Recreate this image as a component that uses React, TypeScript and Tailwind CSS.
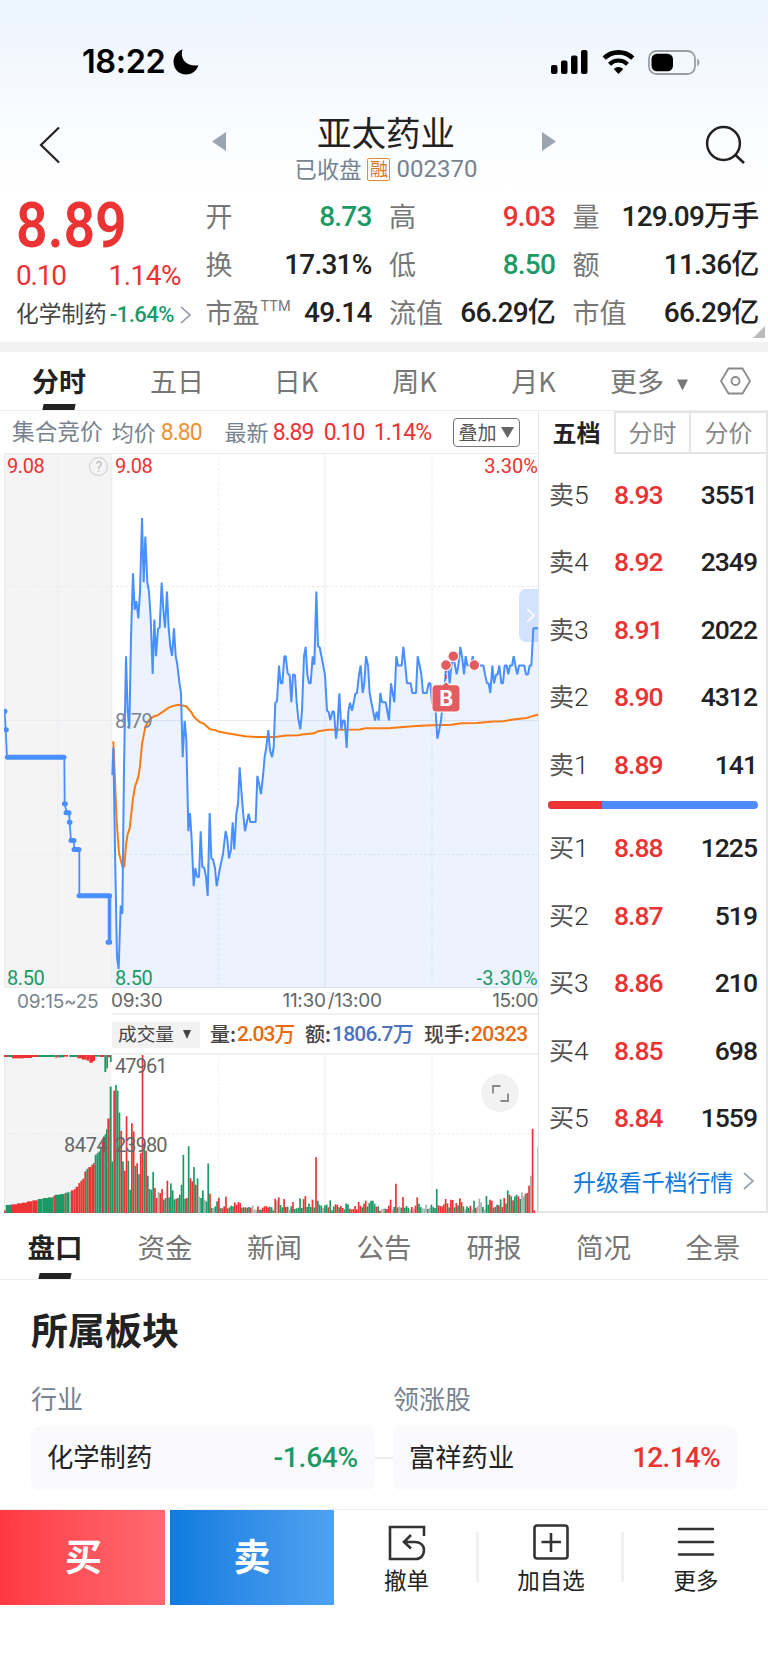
import React from "react"

const pricePath =
  "337,910 340,833 346,1170 351,1420 356,1453 362,1275 367,1298 372,890 378,577 383,730 388,780 393,525 399,345 404,447 409,423 415,471 420,396 426,190 431,370 436,242 442,370 447,396 452,470 458,627 463,474 468,577 474,500 479,497 485,371 490,447 495,497 501,396 506,500 511,550 516,576 522,499 527,576 532,601 538,650 543,680 548,860 554,758 559,810 565,1067 570,1016 575,1090 581,1221 586,1170 591,1194 597,1196 602,1067 607,1167 613,1170 618,1194 623,1248 629,1016 634,1143 639,1146 645,1170 650,1221 658,1180 669,1130 677,1067 682,1090 687,1143 693,1118 698,1042 703,1118 709,1018 714,990 719,888 725,965 730,1022 735,1067 741,1040 746,1018 751,1041 767,1041 772,912 778,938 783,963 789,912 794,858 799,832 805,784 810,840 816,860 821,832 826,707 831,703 837,603 842,653 847,653 853,577 857,577 863,625 869,630 874,706 879,628 885,630 890,706 895,752 901,782 906,730 912,577 917,551 922,628 927,653 932,653 938,577 943,601 949,396 954,549 959,552 965,580 975,630 981,729 986,733 991,756 997,732 1002,732 1008,808 1012,780 1018,681 1024,782 1029,757 1034,757 1040,834 1045,732 1050,707 1056,730 1061,707 1066,682 1071,680 1077,628 1082,603 1088,680 1093,653 1098,577 1104,603 1109,680 1114,706 1125,757 1130,732 1136,757 1141,680 1146,706 1157,706 1167,757 1173,653 1178,680 1183,706 1189,577 1194,603 1205,603 1210,551 1216,603 1221,653 1232,653 1237,680 1248,680 1253,577 1259,603 1264,628 1269,680 1280,680 1286,653 1291,653 1296,706 1307,732 1312,808 1318,782 1323,757 1328,706 1333,680 1338,603 1344,603 1349,653 1354,603 1360,577 1365,603 1370,628 1375,603 1381,551 1386,577 1392,628 1397,577 1402,603 1413,603 1418,577 1423,603 1450,603 1455,628 1461,653 1466,653 1471,680 1477,603 1482,653 1488,628 1493,628 1498,603 1504,653 1509,653 1514,603 1520,603 1525,628 1530,603 1536,603 1541,577 1546,603 1552,628 1557,603 1573,603 1578,628 1584,628 1589,603 1594,603 1600,499 1616,499"

const avgPath =
  "340,815 345,925 350,1040 357,1128 367,1166 373,1166 378,1105 383,1075 389,1060 399,975 405,942 415,915 420,885 426,823 436,775 447,755 463,745 474,742 485,735 506,721 520,716 535,713 558,717 575,735 580,745 597,760 613,767 629,781 645,784 656,788 677,792 704,796 735,801 768,803 826,803 858,799 895,798 905,796 943,793 954,787 985,783 1080,782 1096,779 1165,779 1210,775 1260,772 1296,770 1355,769 1385,765 1430,764 1480,760 1510,759 1540,754 1580,750 1600,744 1616,740"

const barColors: Record<string, string> = { r: "#eb3333", g: "#1b9a66", x: "#adadad" }

// bar tops, one per minute, r = up, g = down, x = flat
const volumes = [
  {
    start: 337,
    bars: "545g 332r 315g 332g 398g 453r 545g 573r 409r 543g 630g 430r 455r 558g 550r 583g 520r 225r 490g 513r 588g 628g 630g 577g 625r 655r 637x 640r 628r 660g 655g 603r 653g 611g 632g 659g 657r 655g 645g 615g 525g 657g 655r 499g 595r 605r 562g 615r 596g 651x 655g 632g 660x 665g 551g 642r 685g 685x 680g 665g 654r 685g 686r 680r 651r 686r 683g 678g 680g 668r 675r 667r 670r 684g 683r 683g 684r 682g 684r 678x 690x 690x 680r 690g",
  },
  {
    start: 783,
    bars: "690g 684r 680r 679r 683r 681g 683g 692g 657r 662x 653r 676g 683g 658r 682r 681g 690x 680g 667r 688g 686g 684g 656g 685g 658r 649r 682g 672g 682g 660r 683g 532r 663g 675g 678g 685x 677g 675g 683r 662g 692g 680g 674r 675r 683g 679r 685r 689g 671g 674g 687r 689r 688r 679r 689r 667r 678r 683g 672r 663r 680g 670g 663g 663g 672g 681r 680g 693r 690x 687x 687g 688r 678r 660r 689x 682g 612r 683g 680x 684g 652r 684g 679g 684g 690x 682r 688x 678r 653r 672g 682g 686x 687x 675x 688g 684x 675g 682g 685g 628g 677r 679r 680r 674r 658r 671r 683g 660r 661r 683g 670r 677g 656r 667r 680g 689x 680g 684g 678r 690x 663g 684r 680x 657x 668x 682g 690x 649g 675g 660r 663r 684g 682r 675g 677r 659g 682r 655r 671g 632g 645r 650g 662r 650g 645g 650r 658g 638x 650x 642g 640r 618r 588x 447r 692r",
  },
]

// [x, width, top, color] of the call auction volumes
const auctionUp: [number, number, number, string][] = [
  [12, 5, 692, "r"],
  [17, 10, 676, "g"],
  [27, 9, 675, "g"],
  [36, 15, 674, "r"],
  [51, 15, 671, "r"],
  [66, 15, 669, "r"],
  [81, 16, 665, "r"],
  [97, 16, 662, "r"],
  [113, 15, 658, "g"],
  [128, 16, 655, "g"],
  [144, 16, 653, "g"],
  [160, 5, 648, "r"],
  [165, 15, 645, "g"],
  [180, 14, 643, "g"],
  [194, 5, 640, "r"],
  [199, 8, 638, "g"],
  [207, 6, 636, "x"],
  [213, 8, 632, "r"],
  [221, 6, 628, "r"],
  [227, 8, 621, "r"],
  [235, 6, 610, "r"],
  [241, 6, 603, "r"],
  [247, 6, 597, "r"],
  [253, 6, 575, "r"],
  [259, 6, 567, "g"],
  [265, 9, 562, "r"],
  [274, 5, 555, "r"],
  [279, 5, 550, "r"],
  [284, 6, 525, "g"],
  [290, 5, 520, "g"],
  [295, 5, 515, "g"],
  [300, 5, 500, "g"],
  [305, 4, 485, "r"],
  [309, 5, 470, "g"],
  [314, 4, 463, "g"],
  [318, 4, 448, "g"],
  [322, 7, 416, "r"],
  [329, 6, 320, "g"],
]

const auctionDown: [number, number, number, string][] = [
  [12, 12, 231, "r"],
  [24, 12, 231, "g"],
  [36, 36, 235, "r"],
  [72, 24, 234, "r"],
  [96, 18, 231, "r"],
  [114, 52, 231, "g"],
  [166, 6, 233, "r"],
  [172, 20, 232, "g"],
  [192, 12, 230, "r"],
  [208, 24, 231, "g"],
  [232, 14, 235, "r"],
  [246, 14, 239, "r"],
  [260, 8, 242, "r"],
  [268, 11, 248, "r"],
  [279, 6, 243, "r"],
  [285, 14, 230, "g"],
  [299, 14, 231, "r"],
  [313, 6, 276, "g"],
  [319, 5, 265, "g"],
  [324, 6, 232, "r"],
  [330, 5, 246, "g"],
]

const sells = [
  ["卖5", "8.93", "3551"],
  ["卖4", "8.92", "2349"],
  ["卖3", "8.91", "2022"],
  ["卖2", "8.90", "4312"],
  ["卖1", "8.89", "141"],
]

const buys = [
  ["买1", "8.88", "1225"],
  ["买2", "8.87", "519"],
  ["买3", "8.86", "210"],
  ["买4", "8.85", "698"],
  ["买5", "8.84", "1559"],
]

const StatusBar = () => (
  <div className="flex h-[124px] items-center pl-[82px] pr-[68px]">
    <span className="font-['Inter'] text-[32.5px] font-semibold leading-none tracking-[-0.4px] text-black">18:22</span>
    <svg className="ml-[8px] h-[26px] w-[26px]" viewBox="0 0 26 26">
      <path d="M9.500 0.500C7 9 11.500 17.500 25.500 16.500C23 22.500 18.500 25.500 13 25.500C6 25.500 0.500 20 0.500 13C0.500 7 4 2.500 9.500 0.500Z" />
    </svg>
    <div className="ml-auto flex items-center">
      <svg className="h-[24px] w-[37px]" viewBox="0 0 37 24">
        <rect x="0" y="15" width="6.500" height="9" rx="2" />
        <rect x="10" y="10.500" width="6.500" height="13.500" rx="2" />
        <rect x="20" y="5.500" width="6.500" height="18.500" rx="2" />
        <rect x="30" y="0" width="6.500" height="24" rx="2" />
      </svg>
      <svg className="ml-[14px] h-[24px] w-[33px]" viewBox="0 0 33 24">
        <path d="M2.200 8.200a20.500 20.500 0 0 1 28.600 0" fill="none" stroke="#000" strokeWidth="4.600" />
        <path d="M7.500 14.200a12.800 12.800 0 0 1 18 0" fill="none" stroke="#000" strokeWidth="4.200" />
        <path d="M16.500 24l-4.800-5a7 7 0 0 1 9.600 0z" />
      </svg>
      <svg className="ml-[13px] h-[25px] w-[52px]" viewBox="0 0 52 25">
        <rect x="1" y="1" width="46" height="23" rx="7.500" fill="none" stroke="#9b9da1" strokeWidth="1.800" />
        <rect x="3.500" y="3.700" width="21.500" height="17.600" rx="5.500" />
        <path d="M49.200 8.600c3 1.500 3 6.300 0 7.800z" fill="#9b9da1" />
      </svg>
    </div>
  </div>
)

const TitleBar = () => (
  <div className="flex h-[66px] items-start pl-[39px] pr-[23px]">
    <svg className="mt-[2px] h-[38px] w-[22px]" viewBox="0 0 22 38" fill="none" stroke="#222" strokeWidth="2.200">
      <path d="M20 1.500L2 19L20 36.500" />
    </svg>
    <svg className="ml-[151px] mt-[8px] h-[19px] w-[14px]" viewBox="0 0 14 19" fill="#9aa5b1">
      <path d="M0 9.500L14 0V19z" />
    </svg>
    <div className="flex w-[316px] flex-col items-center pl-[4px]">
      <div className="mt-[-11px] text-[34.500px] leading-[36px] text-[#222]">亚太药业</div>
      <div className="mt-[8px] flex items-center text-[22.300px] leading-[24px] text-[#77838f]">
        <span className="mt-[-2px]">已收盘</span>
        <span className="ml-[6px] flex h-[23px] w-[23px] items-center justify-center rounded-[2px] border border-[#e08a3c] pb-[2px] text-[18px] leading-none text-[#d9771f]">融</span>
        <span className="ml-[6px] font-['Roboto'] text-[24px]">002370</span>
      </div>
    </div>
    <svg className="mt-[8px] h-[19px] w-[14px]" viewBox="0 0 14 19" fill="#9aa5b1">
      <path d="M14 9.500L0 0V19z" />
    </svg>
    <svg className="ml-auto mt-[1px] h-[41px] w-[40px]" viewBox="0 0 40 41" fill="none" stroke="#222" strokeWidth="2.500">
      <circle cx="18.500" cy="18.500" r="16.400" />
      <path d="M30.500 30L39 38" />
    </svg>
  </div>
)

const Cell = ({ label, sup, value, color }: { label: string; sup?: string; value: string; color: string }) => (
  <div className="flex h-[48px] items-center justify-between">
    <span className="relative mt-[-3px] text-[27px] leading-none text-[#777]">
      {label}
      {sup && <sup className="absolute left-[55px] top-[2px] font-['Roboto'] text-[14.500px] leading-none">{sup}</sup>}
    </span>
    <span className={"font-['Roboto','Noto_Sans_CJK_SC'] text-[28px] font-medium leading-none tracking-[-0.8px] " + color}>{value}</span>
  </div>
)

const Quote = () => (
  <div className="flex h-[152px] pl-[16px]">
    <div className="w-[189.5px] shrink-0 text-[#eb3333]">
      <div className="mt-[4px] h-[63px] origin-left scale-x-[0.88] font-['Roboto'] text-[63px] font-semibold leading-[63px]">8.89</div>
      <div className="mt-[5px] flex w-[165px] justify-between font-['Roboto'] text-[28px] leading-[28px]">
        <span className="tracking-[-1.200px]">0.10</span>
        <span className="tracking-[-0.500px]">1.14%</span>
      </div>
      <div className="mt-[12px] flex items-center text-[22.700px] leading-[24px] text-[#444]">
        <span className="mt-[-3px]">化学制药</span>
        <span className="ml-[3px] mt-[1px] font-['Roboto'] text-[22px] font-medium tracking-[-0.500px] text-[#1b9a66]">-1.64%</span>
        <svg className="ml-[6px] h-[18px] w-[11px]" viewBox="0 0 11 18" fill="none" stroke="#8d98a5" strokeWidth="1.600">
          <path d="M1 1L10 9L1 17" />
        </svg>
      </div>
    </div>
    <div className="grid w-[553px] shrink-0 grid-cols-[166px_166px_186px] content-start gap-x-[17.500px] pt-[3px]">
      <Cell label="开" value="8.73" color="text-[#1b9a66]" />
      <Cell label="高" value="9.03" color="text-[#eb3333]" />
      <Cell label="量" value="129.09万手" color="text-[#222]" />
      <Cell label="换" value="17.31%" color="text-[#222]" />
      <Cell label="低" value="8.50" color="text-[#1b9a66]" />
      <Cell label="额" value="11.36亿" color="text-[#222]" />
      <Cell label="市盈" sup="TTM" value="49.14" color="text-[#222]" />
      <Cell label="流值" value="66.29亿" color="text-[#222]" />
      <Cell label="市值" value="66.29亿" color="text-[#222]" />
    </div>
    <svg className="ml-[-6px] mt-[136px] h-[12px] w-[12px] shrink-0" viewBox="0 0 12 12" fill="#bbb">
      <path d="M12 0V12H0z" />
    </svg>
  </div>
)

const PeriodTabs = () => (
  <div className="relative flex h-[59px] border-b border-[#eee] text-[27px] leading-[58px] text-[#777]">
    <div className="w-[118px] text-center font-bold text-[#222]">分时</div>
    <div className="w-[118px] text-center">五日</div>
    <div className="w-[120px] text-center">日K</div>
    <div className="w-[117px] text-center">周K</div>
    <div className="w-[121px] text-center">月K</div>
    <div className="ml-[16px]">更多</div>
    <svg className="ml-[13px] mt-[27px] h-[12px] w-[11px]" viewBox="0 0 12 12" fill="#777">
      <path d="M0 0h12L6 12z" />
    </svg>
    <svg className="ml-[32px] mt-[15px] h-[28px] w-[31px]" viewBox="0 0 31 28" fill="none" stroke="#8a8a8a" strokeWidth="1.800">
      <path d="M8.500 1.500h14L30 14l-7.500 12.500h-14L1 14z" />
      <circle cx="15.500" cy="14" r="4" />
    </svg>
    <div className="absolute bottom-0 left-[43px] h-[6px] w-[32px] -skew-x-[12deg] bg-[#222]" />
  </div>
)

const InfoRow = () => (
  <div className="flex h-[42px] items-center pl-[12px] text-[22px] leading-none text-[#77838f]">
    <span className="mt-[-2px] text-[22.700px]">集合竞价</span>
    <span className="ml-[9px] mt-[-2px]">均价</span>
    <span className="ml-[5px] font-['Roboto'] text-[23px] tracking-[-1px] text-[#ee9233]">8.80</span>
    <span className="ml-[23px] mt-[-2px]">最新</span>
    <span className="ml-[4px] w-[51px] font-['Roboto'] text-[23px] tracking-[-1px] text-[#eb3333]">8.89</span>
    <span className="w-[50px] font-['Roboto'] text-[23px] tracking-[-1px] text-[#eb3333]">0.10</span>
    <span className="w-[79px] font-['Roboto'] text-[23px] tracking-[-0.800px] text-[#eb3333]">1.14%</span>
    <span className="flex h-[29px] w-[67px] items-center justify-center gap-[4px] rounded-[4px] border-[1.5px] border-[#777] text-[19px] text-[#555]">
      <span className="mt-[-2px]">叠加</span>
      <svg className="h-[11px] w-[13px]" viewBox="0 0 13 11" fill="#666">
        <path d="M0 0h13L6.500 11z" />
      </svg>
    </span>
  </div>
)

const PriceChart = () => (
  <div className="relative ml-[4px] h-[535px] w-[534px] font-['Roboto'] text-[20px] leading-none tracking-[-0.4px]">
    <svg className="h-[535px] w-[534px]" viewBox="12 8 1602 1498" preserveAspectRatio="none">
      <rect x="12" y="8" width="322" height="1498" fill="#f4f4f4" />
      <g fill="none" stroke="#e9ebf1" strokeWidth="3">
        <path d="M12 9H1616M12 757H1616M12 1505H1616M13 8V1506M174 8V1506M335 8V1506M975 8V1506" />
        <path d="M12 382H1616M12 1132H1616M656 8V1506M1296 8V1506" strokeDasharray="8 6" />
      </g>
      <polygon points={pricePath + " 1616,1506 337,1506"} fill="#4a8cff" fillOpacity="0.105" />
      <polyline points={avgPath} fill="none" stroke="#fa7b14" strokeWidth="2" vectorEffect="non-scaling-stroke" />
      <polyline points={pricePath} fill="none" stroke="#4a8fff" strokeWidth="2" strokeLinejoin="bevel" vectorEffect="non-scaling-stroke" />
      <g fill="none" stroke="#4a8fff" strokeLinecap="round">
        <polyline
          points="14,731 17,783 21,860 193,860 194,990 200,1015 207,1015 209,1042 213,1093 221,1093 223,1118 238,1118 238,1248 326,1248 326,1378 331,1378 331,1248"
          strokeWidth="1.800"
          vectorEffect="non-scaling-stroke"
        />
        <path
          d="M12 731h3M18 783h1M22 860H192M193 990h3M198 1015h9M208 1042h2M213 1093h9M222 1118h15M237 1248h92M324 1378h5"
          strokeWidth="5"
          vectorEffect="non-scaling-stroke"
        />
      </g>
      {/* trade marks */}
      <g fill="#e25c62" stroke="#fff" strokeWidth="3">
        <path d="M1338 610V655" stroke="#eb3333" strokeWidth="4" strokeDasharray="12 7" />
        <ellipse cx="1338" cy="602" rx="16" ry="15" />
        <ellipse cx="1360" cy="577" rx="16" ry="15" />
        <ellipse cx="1423" cy="602" rx="16" ry="15" />
        <path d="M1308 657h20l10 -9l10 9h20q12 0 12 12v52q0 12 -12 12h-60q-12 0 -12 -12v-52q0 -12 12 -12z" />
      </g>
    </svg>
    <div className="absolute left-[428px] top-[235px] w-[28px] text-center font-['Inter'] text-[21px] font-bold text-white">B</div>
    <div className="absolute right-0 top-[136px] flex h-[53px] w-[19px] items-center justify-center rounded-l-[7px] bg-[#4a8cff]/25">
      <svg className="ml-[3px] h-[15px] w-[9px]" viewBox="0 0 9 15" fill="none" stroke="#fff" strokeWidth="1.600">
        <path d="M1 1l7 6.500l-7 6.500" />
      </svg>
    </div>
    <div className="absolute left-[3px] top-[3px] text-[#eb3333]">9.08</div>
    <div className="absolute left-[85px] top-[4px] flex h-[19px] w-[19px] items-center justify-center rounded-full border-[1.5px] border-[#ccc] text-[14px] text-[#bbb]">?</div>
    <div className="absolute left-[111px] top-[3px] text-[#eb3333]">9.08</div>
    <div className="absolute right-0 top-[3px] tracking-[0px] text-[#eb3333]">3.30%</div>
    <div className="absolute left-[111px] top-[258px] text-[#77838f]">8.79</div>
    <div className="absolute left-[3px] top-[515px] text-[#1b9a66]">8.50</div>
    <div className="absolute left-[111px] top-[515px] text-[#1b9a66]">8.50</div>
    <div className="absolute right-0 top-[515px] tracking-[0.4px] text-[#1b9a66]">-3.30%</div>
  </div>
)

const VolumeHeader = () => (
  <div className="ml-[112px] flex h-[42px] items-center border-y-2 border-[#f0f0f0] pt-[1px] text-[20px] font-medium leading-none text-[#444]">
    <span className="flex h-[26px] w-[88px] items-center bg-[#f2f2f2] pl-[6px] text-[18.700px] font-normal">
      <span className="mt-[-2px]">成交量</span>
      <svg className="ml-[9px] h-[9px] w-[8px]" viewBox="0 0 8 9" fill="#444">
        <path d="M0 0h8L4 9z" />
      </svg>
    </span>
    <span className="ml-[10px] mt-[-1px] w-[27px]">量:</span>
    <span className="w-[68px] font-['Roboto','Noto_Sans_CJK_SC'] text-[21px] tracking-[-1.100px] text-[#e8690f]">2.03万</span>
    <span className="mt-[-1px] w-[27px]">额:</span>
    <span className="w-[92px] font-['Roboto','Noto_Sans_CJK_SC'] text-[21px] tracking-[-0.800px] text-[#4a72c0]">1806.7万</span>
    <span className="mt-[-1px] w-[47px]">现手:</span>
    <span className="font-['Roboto'] text-[21px] tracking-[-0.600px] text-[#e8690f]">20323</span>
  </div>
)

const VolumeChart = () => (
  <div className="relative ml-[4px] h-[158px] w-[534px] font-['Roboto'] text-[20px] leading-none tracking-[-0.9px] text-[#666]">
    <svg className="h-[158px] w-[534px]" viewBox="12 225 1602 475" preserveAspectRatio="none">
      <rect x="12" y="225" width="322" height="475" fill="#f4f4f4" />
      <g fill="none" stroke="#e9ebf1" strokeWidth="3">
        <path d="M13 225V700M975 225V700" />
        <path d="M12 462H1616M656 225V700M1296 225V700" strokeDasharray="8 6" />
      </g>
      {auctionUp.map(([x, w, y, c]) => (
        <rect key={x} x={x} y={y} width={w} height={700 - y} fill={barColors[c]} />
      ))}
      {auctionDown.map(([x, w, y, c]) => (
        <rect key={x} x={x} y="225" width={w} height={y - 225} fill={barColors[c]} />
      ))}
      {volumes.map(({ start, bars }) =>
        bars.split(" ").map((b, i) => {
          const top = parseInt(b)
          return <rect key={start + i} x={start + i * 5.325 - 2.5} y={top} width="5.100" height={700 - top} fill={barColors[b.slice(-1)]} />
        })
      )}
      <rect x="1612" y="500" width="4" height="200" fill="#adadad" />
    </svg>
    <div className="absolute left-[111px] top-[1px]">47961</div>
    <div className="absolute left-[60px] top-[80px] tracking-[-0.400px]">8474</div>
    <div className="absolute left-[111px] top-[80px]">23980</div>
    <div className="absolute left-[477px] top-[19px] flex h-[38px] w-[38px] items-center justify-center rounded-full bg-[#f2f2f2]">
      <svg className="h-[17px] w-[17px]" viewBox="0 0 17 17" fill="none" stroke="#888" strokeWidth="1.800">
        <path d="M1 8.500V1h7.500M16 8.500V16H8.500" />
      </svg>
    </div>
  </div>
)

const Level = ({ row }: { row: string[] }) => (
  <div className="flex h-[67.5px] items-center pl-[10px] pr-[9px] font-['Roboto'] text-[26.500px] font-medium leading-none">
    <span className="flex w-[65px] items-center font-light text-[#333]">
      <span className="mt-[-3px] font-['Noto_Sans_CJK_SC'] text-[25px] font-normal text-[#555]">{row[0][0]}</span>
      {row[0][1]}
    </span>
    <span className="tracking-[-1px] text-[#eb3333]">{row[1]}</span>
    <span className="ml-auto tracking-[-1px] text-[#222]">{row[2]}</span>
  </div>
)

const OrderBook = () => (
  <div className="flex h-[802px] w-[230px] flex-col border-b-2 border-l border-r-2 border-[#e5e5e5] text-[24px] leading-none">
    <div className="flex h-[43px] shrink-0">
      <div className="flex w-[75px] items-center justify-center pb-[2px] font-bold text-[#222]">五档</div>
      <div className="flex w-[77px] items-center justify-center border-2 border-[#e5e5e5] pb-[2px] text-[#888]">分时</div>
      <div className="flex w-[75px] items-center justify-center border-b-2 border-t-2 border-[#e5e5e5] pb-[2px] text-[#888]">分价</div>
    </div>
    <div className="mt-[7px]">
      {sells.map((row) => (
        <Level key={row[0]} row={row} />
      ))}
    </div>
    <div className="ml-[9px] mt-[2px] flex h-[8px] w-[210px] shrink-0 overflow-hidden rounded-full bg-[#4f8bff]">
      <div className="w-[54px] bg-[#eb3333]" />
    </div>
    <div className="mt-[6px]">
      {buys.map((row) => (
        <Level key={row[0]} row={row} />
      ))}
    </div>
    <div className="mt-[18px] flex items-center pl-[34px] text-[22.900px] text-[#0a78de]">
      升级看千档行情
      <svg className="ml-[10px] h-[18px] w-[11px]" viewBox="0 0 11 18" fill="none" stroke="#9aa5b1" strokeWidth="1.800">
        <path d="M1 1L10 9L1 17" />
      </svg>
    </div>
  </div>
)

const SectionTabs = () => (
  <div className="relative flex h-[67px] border-b border-[#eee] text-[27.500px] leading-[66px] text-[#777]">
    <div className="w-[110px] text-center font-bold text-[#222]">盘口</div>
    <div className="w-[110px] text-center">资金</div>
    <div className="w-[109px] text-center">新闻</div>
    <div className="w-[110px] text-center">公告</div>
    <div className="w-[110px] text-center">研报</div>
    <div className="w-[109px] text-center">简况</div>
    <div className="w-[110px] text-center">全景</div>
    <div className="absolute bottom-0 left-[39px] h-[6px] w-[32px] -skew-x-[12deg] bg-[#222]" />
  </div>
)

const Sector = () => (
  <div className="h-[229px] pl-[31px] pr-[31px]">
    <h2 className="pt-[29px] text-[37px] font-bold leading-[40px] text-[#222]">所属板块</h2>
    <div className="mt-[35px] grid grid-cols-2 gap-x-[18px] text-[26px] leading-[28px] text-[#77838f]">
      <div>行业</div>
      <div>领涨股</div>
    </div>
    <div className="mt-[14px] flex items-center text-[26.300px] leading-none text-[#222]">
      <div className="flex h-[64px] w-[344px] items-center justify-between rounded-[8px] bg-[#fafafc] pl-[16px] pr-[17px]">
        <span className="mt-[-3px]">化学制药</span>
        <span className="font-['Roboto'] text-[28px] font-medium tracking-[-0.200px] text-[#1b9a66]">-1.64%</span>
      </div>
      <div className="h-[2px] w-[18px] bg-[#eee]" />
      <div className="flex h-[64px] w-[344px] items-center justify-between rounded-[8px] bg-[#fafafc] pl-[16px] pr-[17px]">
        <span className="mt-[-3px]">富祥药业</span>
        <span className="font-['Roboto'] text-[28px] font-medium tracking-[-0.700px] text-[#eb3333]">12.14%</span>
      </div>
    </div>
  </div>
)

const BottomBar = () => (
  <div className="flex h-[96px] border-t border-[#eee] text-[22.500px] leading-none text-[#222]">
    <div className="flex w-[165px] items-center justify-center bg-linear-to-r from-[#ff3843] to-[#ff6871] pb-[4px] pl-[2px] text-[37px] font-bold text-white">买</div>
    <div className="ml-[5px] flex w-[164px] items-center justify-center bg-linear-to-r from-[#0c7be0] to-[#4fa2f0] pb-[4px] text-[37px] font-bold text-white">卖</div>
    <div className="flex w-[145px] flex-col items-center pt-[15px]">
      <svg className="h-[36px] w-[38px]" viewBox="0 0 38 36" fill="none" stroke="#333" strokeWidth="2.600">
        <path d="M36 11V2H2V34H28C33 34 36 30 36 25C36 20 32 17 27 17H17M23 10L16 17L23 23.500" />
      </svg>
      <span className="mt-[7px]">撤单</span>
    </div>
    <div className="ml-[-3px] mt-[22px] h-[50px] w-[3px] bg-[#f0f0f0]" />
    <div className="flex w-[142px] flex-col items-center pl-[2px] pt-[14px]">
      <svg className="h-[36px] w-[36px]" viewBox="0 0 36 36" fill="none" stroke="#333" strokeWidth="2.600">
        <rect x="1.500" y="1.500" width="33" height="33" rx="2.500" />
        <path d="M18 9V28M8.500 18H28" />
      </svg>
      <span className="mt-[8px]">加自选</span>
    </div>
    <div className="mt-[22px] h-[50px] w-[3px] bg-[#f0f0f0]" />
    <div className="flex w-[144px] flex-col items-center pt-[15px]">
      <svg className="h-[36px] w-[38px]" viewBox="0 0 38 36" fill="none" stroke="#333" strokeWidth="2.600" strokeLinecap="round">
        <path d="M2 4H36M2 17H36M2 29.500H36" />
      </svg>
      <span className="mt-[7px]">更多</span>
    </div>
  </div>
)

const App = () => {
  return (
    <div className="h-[1670px] w-[768px] overflow-hidden bg-white font-['Noto_Sans_CJK_SC',sans-serif]">
      <div className="bg-linear-to-b from-[#ecf4fe] via-[#f7faff] to-white">
        <StatusBar />
        <TitleBar />
      </div>
      <Quote />
      <div className="h-[10px] bg-[#f2f2f2]" />
      <PeriodTabs />
      <div className="flex">
        <div className="w-[538px]">
          <InfoRow />
          <PriceChart />
          <div className="flex h-[25px] items-center pl-[17px] font-['Inter'] text-[19px] leading-none tracking-[-0.3px] text-[#666]">
            <span className="mt-[2px] w-[94px] text-[#77838f]">09:15~25</span>
            <span>09:30</span>
            <span className="ml-[120px]">11:30</span>
            <span className="ml-[2px] mr-auto">/13:00</span>
            <span className="tracking-[-0.600px]">15:00</span>
          </div>
          <VolumeHeader />
          <VolumeChart />
        </div>
        <OrderBook />
      </div>
      <SectionTabs />
      <Sector />
      <BottomBar />
    </div>
  )
}

export default App
